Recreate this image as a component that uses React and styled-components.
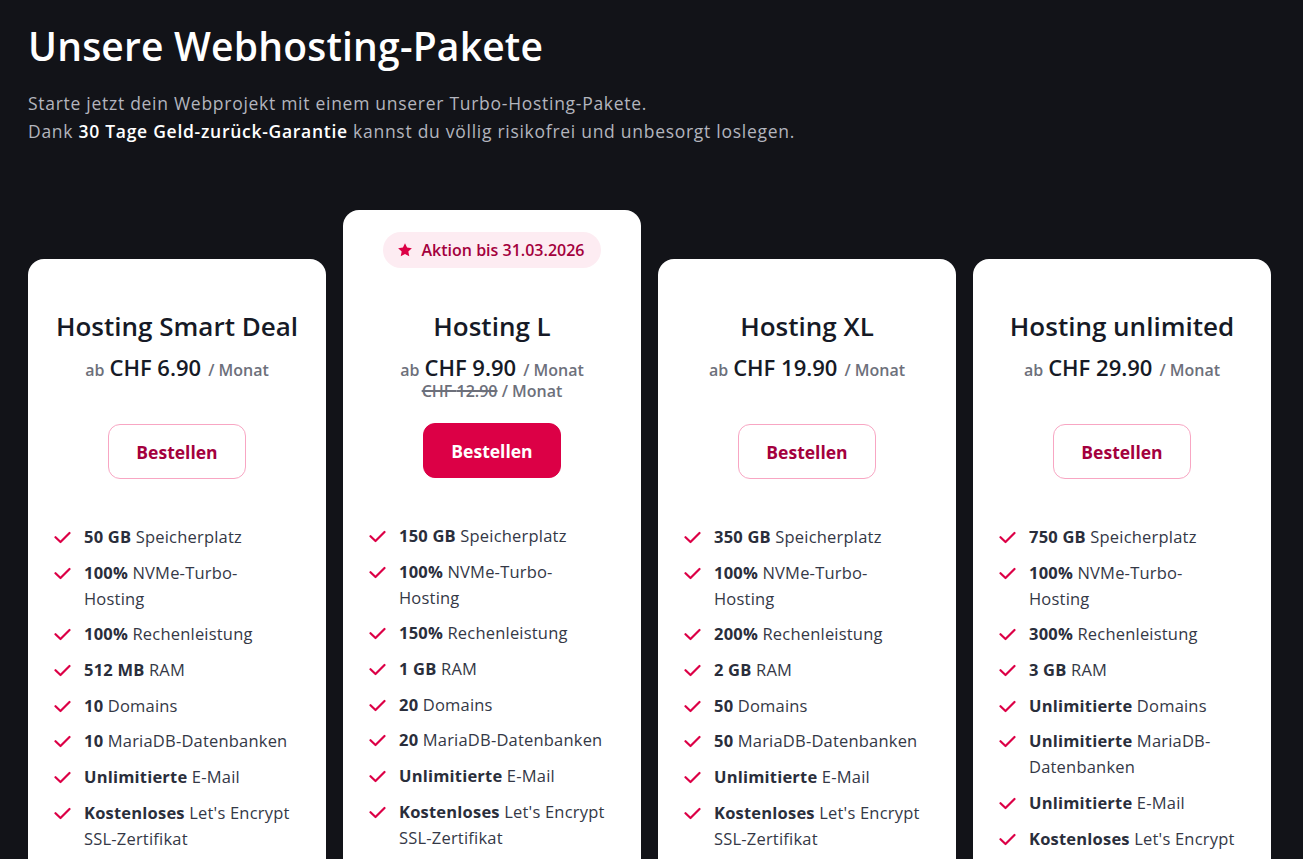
import styled, { createGlobalStyle } from 'styled-components'

const GlobalStyle = createGlobalStyle`
  body {
    margin: 0;
    background: #121318;
    font-family: "Open Sans", "Noto Sans", sans-serif;
    overflow: hidden;
  }
`

const Page = styled.main`
  padding: 20px 28px 0 28px;
  height: 859px;
  box-sizing: border-box;
  overflow: hidden;
`

const Title = styled.h1`
  margin: 0;
  color: #fff;
  font-size: 39px;
  font-weight: 600;
  line-height: 52px;
  letter-spacing: 0.2px;
`

const Lead = styled.p`
  margin: 17px 0 0;
  color: #b3b5be;
  font-size: 17.5px;
  line-height: 28px;
  letter-spacing: 0.72px;

  strong {
    color: #fff;
    font-weight: 600;
  }
`

const Grid = styled.div`
  display: grid;
  grid-template-columns: repeat(4, 298px);
  column-gap: 17px;
  align-items: start;
  margin-top: 65px;
`

const Card = styled.section`
  background: #fff;
  border-radius: 16px;
  margin-top: ${p => (p.$featured ? '0' : '49px')};
  padding: ${p => (p.$featured ? '22px' : '50px')} 24px 40px;
  display: flex;
  flex-direction: column;
  align-items: center;
  min-height: 700px;
`

const Badge = styled.div`
  display: flex;
  align-items: center;
  gap: 9px;
  height: 36px;
  padding: 0 17px 0 14px;
  border-radius: 18px;
  background: #fdecf2;
  color: #a4003d;
  font-size: 16px;
  font-weight: 600;
  margin-bottom: 41px;
  svg {
    width: 16px;
    height: 16px;
  }
`

const PlanName = styled.h2`
  margin: 0;
  color: #161a26;
  font-size: 26px;
  font-weight: 600;
  line-height: 34px;
  white-space: nowrap;
`

const PriceRow = styled.div`
  margin-top: 12px;
  display: flex;
  align-items: baseline;
  gap: 5px;
  line-height: 24px;
`

const Small = styled.span`
  color: #6d707b;
  font-size: 16px;
  font-weight: 600;
`

const Amount = styled.span`
  color: #161a26;
  font-size: 22px;
  font-weight: 600;
  margin-right: 2px;
`

const OldPrice = styled.div`
  color: #6d707b;
  font-size: 16px;
  font-weight: 600;
  line-height: 19px;
  s {
    text-decoration-thickness: 1.5px;
  }
`

const Button = styled.button`
  margin-top: ${p => (p.$solid ? '22px' : '42px')};
  width: 138px;
  height: 55px;
  border-radius: 12px;
  border: 1px solid ${p => (p.$solid ? '#dc0046' : '#f8a6c3')};
  background: ${p => (p.$solid ? '#dc0046' : '#fff')};
  color: ${p => (p.$solid ? '#fff' : '#a4003d')};
  font-family: inherit;
  font-size: 17.5px;
  font-weight: 700;
  cursor: pointer;
`

const Features = styled.ul`
  list-style: none;
  margin: 45px 0 0;
  padding: 0 0 0 2px;
  align-self: stretch;
  display: flex;
  flex-direction: column;
  gap: 9.7px;
`

const Feature = styled.li`
  display: flex;
  gap: 13px;
  color: #343846;
  font-size: 16.5px;
  font-weight: 500;
  line-height: 26px;
  letter-spacing: 0.2px;
  padding-right: 11px;

  b {
    font-weight: 700;
    color: #2a2e3b;
  }
  svg {
    flex: none;
    width: 17px;
    height: 26px;
  }
`

const Check = () => (
  <svg viewBox="0 0 17 26" fill="none">
    <path d="M1.5 13.2l5 4.8 9-9" stroke="#dc0046" strokeWidth="2.2" strokeLinecap="round" strokeLinejoin="round" />
  </svg>
)

const Star = () => (
  <svg viewBox="0 0 24 24" fill="#dc0046">
    <path d="M12 1.8l3.1 6.6 7.2.9-5.3 5 1.4 7.2L12 18l-6.4 3.5 1.4-7.2-5.3-5 7.2-.9z" />
  </svg>
)

const plans = [
  {
    name: 'Hosting Smart Deal',
    price: '6.90',
    features: [
      ['50 GB', ' Speicherplatz'],
      ['100%', ' NVMe-Turbo-Hosting'],
      ['100%', ' Rechenleistung'],
      ['512 MB', ' RAM'],
      ['10', ' Domains'],
      ['10', ' MariaDB-Datenbanken'],
      ['Unlimitierte', ' E-Mail'],
      ['Kostenloses', " Let's Encrypt SSL-Zertifikat"],
    ],
  },
  {
    name: 'Hosting L',
    price: '9.90',
    old: '12.90',
    featured: true,
    features: [
      ['150 GB', ' Speicherplatz'],
      ['100%', ' NVMe-Turbo-Hosting'],
      ['150%', ' Rechenleistung'],
      ['1 GB', ' RAM'],
      ['20', ' Domains'],
      ['20', ' MariaDB-Datenbanken'],
      ['Unlimitierte', ' E-Mail'],
      ['Kostenloses', " Let's Encrypt SSL-Zertifikat"],
    ],
  },
  {
    name: 'Hosting XL',
    price: '19.90',
    features: [
      ['350 GB', ' Speicherplatz'],
      ['100%', ' NVMe-Turbo-Hosting'],
      ['200%', ' Rechenleistung'],
      ['2 GB', ' RAM'],
      ['50', ' Domains'],
      ['50', ' MariaDB-Datenbanken'],
      ['Unlimitierte', ' E-Mail'],
      ['Kostenloses', " Let's Encrypt SSL-Zertifikat"],
    ],
  },
  {
    name: 'Hosting unlimited',
    price: '29.90',
    features: [
      ['750 GB', ' Speicherplatz'],
      ['100%', ' NVMe-Turbo-Hosting'],
      ['300%', ' Rechenleistung'],
      ['3 GB', ' RAM'],
      ['Unlimitierte', ' Domains'],
      ['Unlimitierte', ' MariaDB-Datenbanken'],
      ['Unlimitierte', ' E-Mail'],
      ['Kostenloses', " Let's Encrypt SSL-Zertifikat"],
    ],
  },
]

function App () {
  return (
    <>
      <GlobalStyle />
      <Page>
        <Title>Unsere Webhosting-Pakete</Title>
        <Lead>
          Starte jetzt dein Webprojekt mit einem unserer Turbo-Hosting-Pakete.
          <br />
          Dank <strong>30 Tage Geld-zurück-Garantie</strong> kannst du völlig risikofrei und unbesorgt loslegen.
        </Lead>
        <Grid>
          {plans.map(plan => (
            <Card key={plan.name} $featured={plan.featured}>
              {plan.featured && (
                <Badge><Star />Aktion bis 31.03.2026</Badge>
              )}
              <PlanName>{plan.name}</PlanName>
              <PriceRow>
                <Small>ab</Small>
                <Amount>CHF {plan.price}</Amount>
                <Small>/ Monat</Small>
              </PriceRow>
              {plan.old && (
                <OldPrice><s>CHF {plan.old}</s> / Monat</OldPrice>
              )}
              <Button $solid={plan.featured}>Bestellen</Button>
              <Features>
                {plan.features.map(([bold, rest]) => (
                  <Feature key={bold + rest}>
                    <Check />
                    <span><b>{bold}</b>{rest}</span>
                  </Feature>
                ))}
              </Features>
            </Card>
          ))}
        </Grid>
      </Page>
    </>
  )
}

export default App
